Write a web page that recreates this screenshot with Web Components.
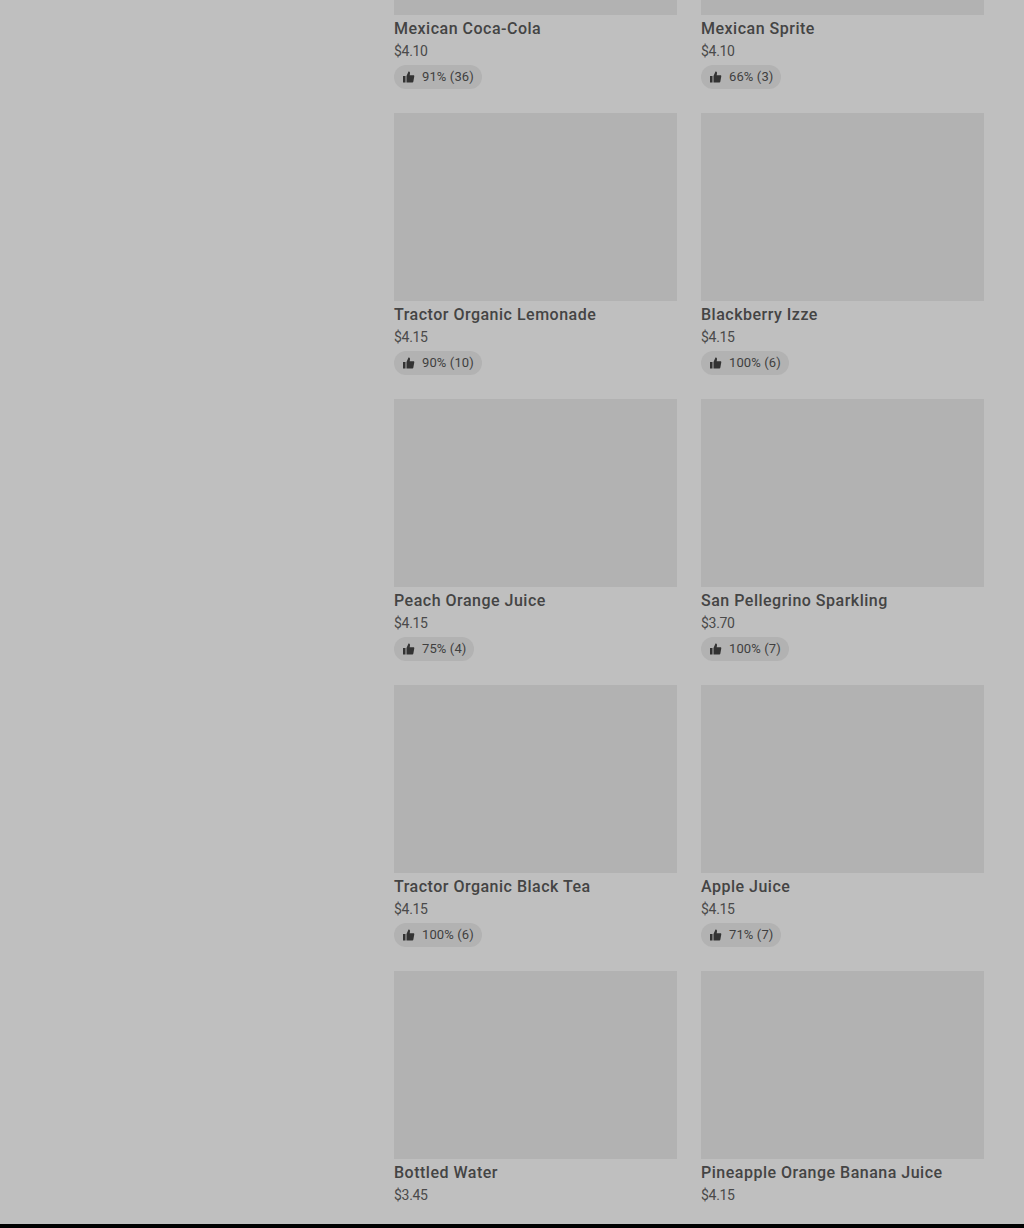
<!DOCTYPE html>
<html><head><meta charset="utf-8"><title>Menu</title>
<style>
html,body{margin:0;padding:0;background:#bfbfbf;height:1228px;overflow:hidden}
</style></head><body>
<menu-page>
<menu-item name="Mexican Coca-Cola" price="$4.10" rating="91% (36)"></menu-item>
<menu-item name="Mexican Sprite" price="$4.10" rating="66% (3)"></menu-item>
<menu-item name="Tractor Organic Lemonade" price="$4.15" rating="90% (10)"></menu-item>
<menu-item name="Blackberry Izze" price="$4.15" rating="100% (6)"></menu-item>
<menu-item name="Peach Orange Juice" price="$4.15" rating="75% (4)"></menu-item>
<menu-item name="San Pellegrino Sparkling" price="$3.70" rating="100% (7)"></menu-item>
<menu-item name="Tractor Organic Black Tea" price="$4.15" rating="100% (6)"></menu-item>
<menu-item name="Apple Juice" price="$4.15" rating="71% (7)"></menu-item>
<menu-item name="Bottled Water" price="$3.45"></menu-item>
<menu-item name="Pineapple Orange Banana Juice" price="$4.15"></menu-item>
</menu-page>
<script>
class MenuPage extends HTMLElement{
  constructor(){super();this.attachShadow({mode:'open'}).innerHTML=`<style>
  :host{display:flex;flex-direction:column;height:1228px;overflow:hidden;font-family:Roboto,"Liberation Sans",sans-serif;color:#3f3f3f}
  .wrap{display:flex;flex:none;margin-top:-173px}
  aside{flex:none;width:394px}
  main{flex:none;width:590px;display:grid;grid-template-columns:283px 283px;column-gap:24px;row-gap:24px}
  .spacer{flex:none;height:19px}
  footer{flex:none;height:4px;background:#000}
  </style><div class="wrap"><aside></aside><main><slot></slot></main></div><div class="spacer"></div><footer></footer>`;}
}
const thumb=`<svg width="12" height="12" viewBox="0 0 12 12" aria-hidden="true"><path fill="#333" d="M0 5H2.5V11.5H0ZM3.5 5L5.5 .6C6.5 .6 7.1 1.3 7 2.3L6.7 4.2H10.5C11 4.2 11.4 4.7 11.3 5.2L10.3 10.8C10.2 11.2 9.9 11.5 9.5 11.5H3.5Z"/></svg>`;
class MenuItem extends HTMLElement{
  connectedCallback(){
    const r=this.getAttribute('rating');
    this.attachShadow({mode:'open'}).innerHTML=`<style>
    :host{display:block}
    .img{height:188px;background:#b2b2b2}
    .name{font-size:16px;font-weight:500;padding-top:2px;line-height:24px;white-space:nowrap;letter-spacing:.5px;color:#444}
    .price{font-size:14px;font-weight:400;line-height:20px;letter-spacing:-.3px;color:#4a4a4a}
    .pill{display:inline-flex;align-items:center;height:24px;margin-top:4px;padding:0 8px 0 9px;gap:7px;border-radius:12px;background:#b2b2b2;font-size:13px;line-height:24px;letter-spacing:.12px;vertical-align:top}
    </style><div class="img"></div><div class="name">${this.getAttribute('name')}</div><div class="price">${this.getAttribute('price')}</div>${r?`<div class="pill">${thumb}<span>${r}</span></div>`:''}`;
  }
}
customElements.define('menu-page',MenuPage);
customElements.define('menu-item',MenuItem);
</script>
</body></html>
